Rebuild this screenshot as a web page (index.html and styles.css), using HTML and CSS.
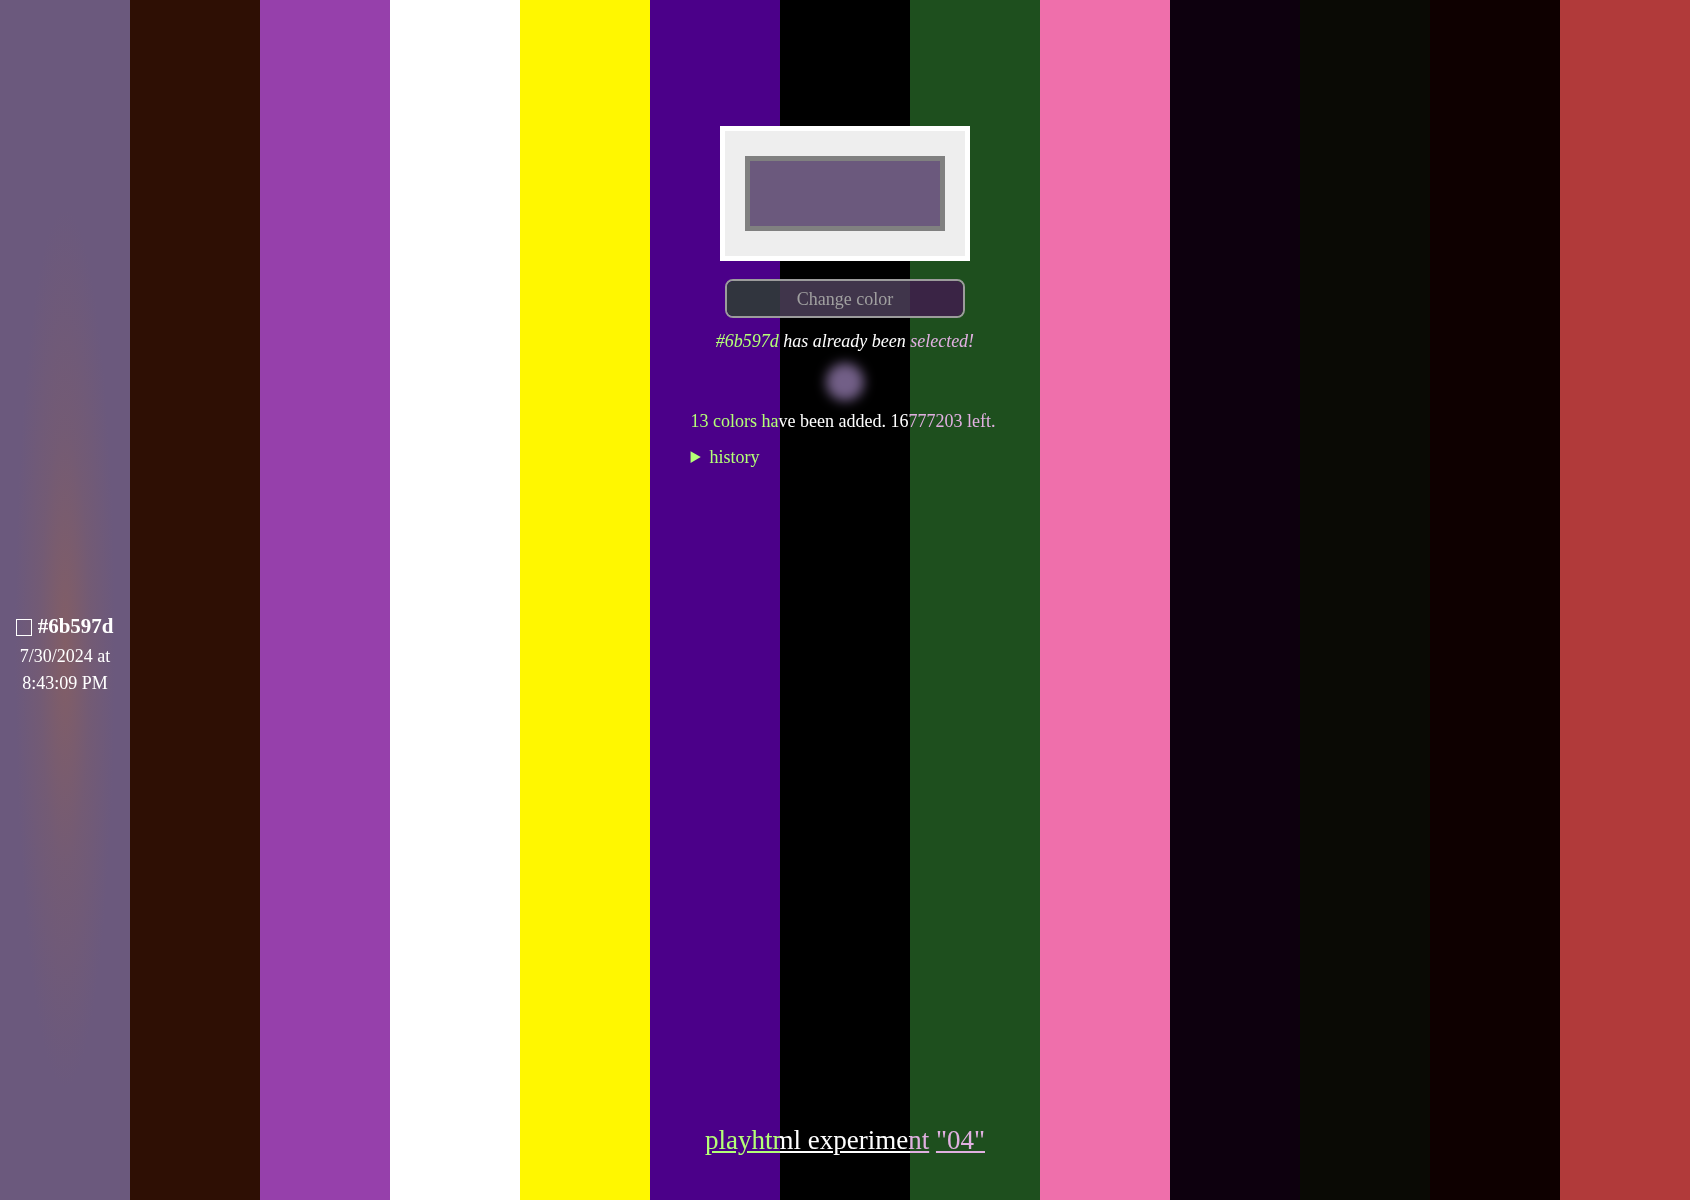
FILE: index.html
```html
<!DOCTYPE html>
<html lang="en">
<head>
<meta charset="utf-8">
<title>playhtml experiment 04</title>
<link rel="stylesheet" href="styles.css">
</head>
<body>
<div class="stripes">
  <div class="stripe stripe-first">
    <div class="entry">
      <div class="entry-title"><span class="entry-swatch"></span> #6b597d</div>
      <div class="entry-date">7/30/2024 at 8:43:09 PM</div>
    </div>
  </div>
  <div class="stripe c2"></div>
  <div class="stripe c3"></div>
  <div class="stripe c4"></div>
  <div class="stripe c5"></div>
  <div class="stripe c6"></div>
  <div class="stripe c7"></div>
  <div class="stripe c8"></div>
  <div class="stripe c9"></div>
  <div class="stripe c10"></div>
  <div class="stripe c11"></div>
  <div class="stripe c12"></div>
  <div class="stripe c13"></div>
</div>

<main class="overlay">
  <div class="picker"><div class="picker-swatch"></div></div>
  <button class="change-btn" type="button"><span class="change-label">Change color</span></button>
  <p class="status"><em>#6b597d has already been selected!</em></p>
  <div class="blob"></div>
  <div class="info">
    <p class="count">13 colors have been added. 16777203 left.</p>
    <details class="history">
      <summary>history</summary>
    </details>
  </div>
  <footer class="footer">
    <a href="#">playhtml experiment</a> <a href="#">"04"</a>
  </footer>
</main>
</body>
</html>
```

FILE: styles.css
```css
html, body {
  margin: 0;
  padding: 0;
  height: 100%;
}

body {
  font-family: "Liberation Serif", "Times New Roman", serif;
  font-size: 18px;
  background: #000;
  overflow: hidden;
}

.stripes {
  display: flex;
  height: 100vh;
}

.stripe {
  flex: 1 1 0;
}

.stripe-first {
  background:
    radial-gradient(ellipse 50px 440px at 50% 54%, rgba(140, 96, 92, 0.7) 0%, rgba(130, 94, 100, 0.35) 50%, rgba(107, 89, 125, 0) 100%),
    #6b597d;
  display: flex;
  flex-direction: column;
  justify-content: center;
  padding-top: 106px;
  box-sizing: border-box;
  color: #fff;
  text-align: center;
}

.entry-title {
  font-weight: bold;
  font-size: 21px;
  line-height: 34px;
}

.entry-swatch {
  display: inline-block;
  width: 14px;
  height: 15px;
  border: 1px solid #fff;
  vertical-align: -3px;
}

.entry-date {
  font-size: 18px;
  line-height: 27px;
  padding: 0 12px;
}

.c2 { background: #2e0f04; }
.c3 { background: #9640ab; }
.c4 { background: #ffffff; }
.c5 { background: #fff700; }
.c6 { background: #4b0089; }
.c7 { background: #000000; }
.c8 { background: #1e4f1e; }
.c9 { background: #ef6fab; }
.c10 { background: #0d000e; }
.c11 { background: #0a0a05; }
.c12 { background: #0e0000; }
.c13 { background: #b13a3a; }

.overlay {
  position: absolute;
  top: 0;
  left: 0;
  right: 0;
  height: 100vh;
  display: flex;
  flex-direction: column;
  align-items: center;
  padding-top: 126px;
  box-sizing: border-box;
  color: #fff;
}

.picker {
  width: 250px;
  height: 135px;
  box-sizing: border-box;
  border: 5px solid #fff;
  background: #eeeeee;
  padding: 25px 20px;
}

.picker-swatch {
  width: 200px;
  height: 75px;
  box-sizing: border-box;
  border: 5px solid #808080;
  background: #6b597d;
}

.change-btn {
  position: relative;
  margin-top: 18px;
  width: 240px;
  height: 39px;
  box-sizing: border-box;
  border: 2px solid #9c9c9c;
  border-radius: 8px;
  background: transparent;
  color: #a0a0a0;
  font-family: "Liberation Serif", "Times New Roman", serif;
  font-size: 18px;
  padding: 1px 0 0;
}

.change-btn::before {
  content: "";
  position: absolute;
  inset: 0;
  border-radius: 6px;
  background: rgba(107, 89, 125, 0.6);
  mix-blend-mode: difference;
}

.change-label {
  position: relative;
}

.status {
  margin: 12px 0 0;
  line-height: 22px;
  mix-blend-mode: difference;
}

.blob {
  margin-top: 11px;
  width: 38px;
  height: 38px;
  border-radius: 50%;
  background: #725f87;
  filter: blur(6px);
}

.info {
  margin-top: 9px;
  padding-right: 4px;
  display: flex;
  flex-direction: column;
  align-items: flex-start;
}

.count {
  margin: 0;
  line-height: 22px;
  mix-blend-mode: difference;
}

.history {
  margin-top: 14px;
  line-height: 22px;
  mix-blend-mode: difference;
}

.history summary {
  cursor: pointer;
}

.footer {
  margin-top: auto;
  padding-bottom: 44px;
  font-size: 27px;
  line-height: 32px;
  mix-blend-mode: difference;
}

.footer a {
  color: #fff;
}
```
